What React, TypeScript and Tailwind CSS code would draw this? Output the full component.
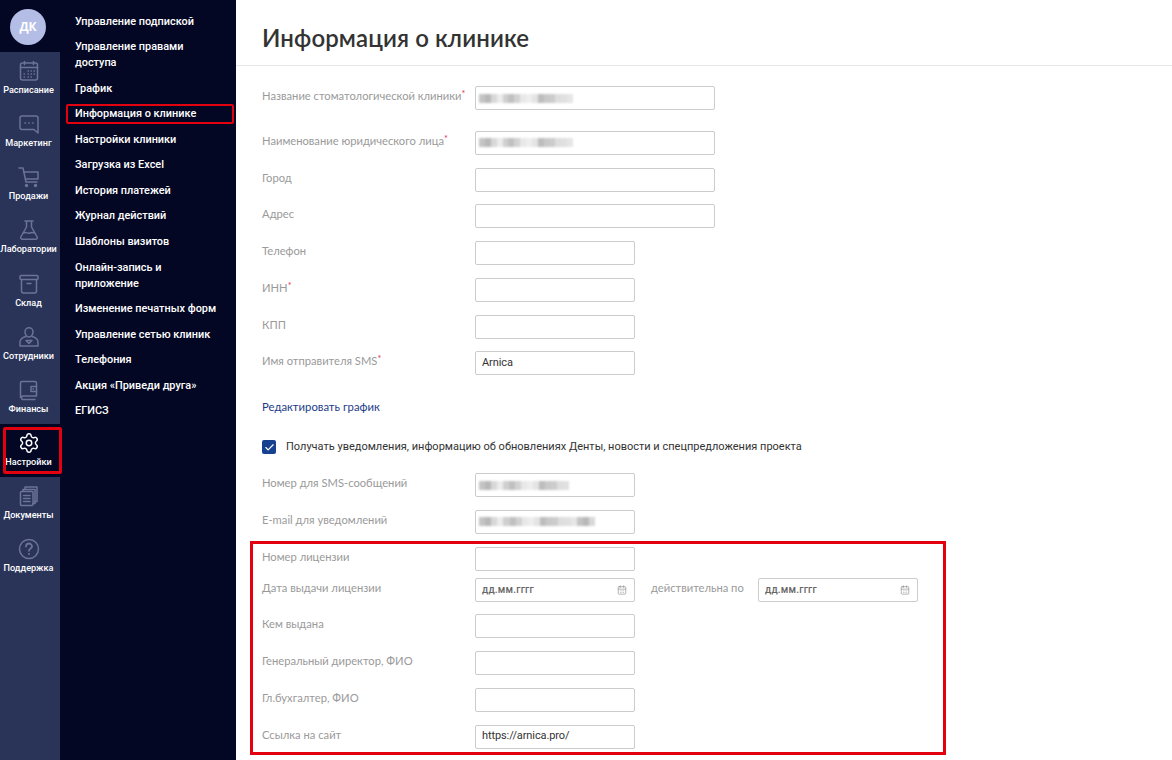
import type { ReactNode } from "react";
import { CalendarDays, Check, Settings } from "lucide-react";

function Glyph({ children }: { children: ReactNode }) {
  return (
    <svg width="22" height="22" viewBox="0 0 22 22" fill="none" stroke="#6b7496" strokeWidth="1.5" strokeLinecap="round" strokeLinejoin="round">
      {children}
    </svg>
  );
}

const railItems: { label: string; icon: ReactNode; active?: boolean }[] = [
  {
    label: "Расписание",
    icon: (
      <Glyph>
        <rect x="2.5" y="3" width="17" height="17" rx="2" />
        <path d="M2.5 7.5h17M6.5 1.5v3M15.5 1.5v3" />
        <path d="M10 11h.5M13 11h.5M16 11h.5M6 14h.5M10 14h.5M13 14h.5M16 14h.5M6 17h.5M10 17h.5M13 17h.5" strokeWidth="1.3" />
      </Glyph>
    ),
  },
  {
    label: "Маркетинг",
    icon: (
      <Glyph>
        <path d="M4 3h14a2 2 0 0 1 2 2v15l-4-3.5H4a2 2 0 0 1-2-2V5a2 2 0 0 1 2-2Z" />
        <path d="M7 10h.5M10.7 10h.5M14.5 10h.5" />
      </Glyph>
    ),
  },
  {
    label: "Продажи",
    icon: (
      <Glyph>
        <path d="M1 2h4l3 14h11" />
        <path d="M5.8 6H20v7H7.3" />
        <circle cx="8.5" cy="19.5" r="1" fill="#6b7496" />
        <circle cx="17.5" cy="19.5" r="1" fill="#6b7496" />
      </Glyph>
    ),
  },
  {
    label: "Лаборатории",
    icon: (
      <Glyph>
        <path d="M7 2h8M8.5 2v6L2.8 18a1.5 1.5 0 0 0 1.3 2.2h13.8a1.5 1.5 0 0 0 1.3-2.2L13.5 8V2" />
        <path d="M5.5 14c2.5-1.5 4.5 1 6.5 0s3-.6 4.5 0" />
      </Glyph>
    ),
  },
  {
    label: "Склад",
    icon: (
      <Glyph>
        <rect x="2" y="2.5" width="18" height="4" rx="1" />
        <path d="M3.5 6.5V18a2 2 0 0 0 2 2h11a2 2 0 0 0 2-2V6.5M9 10.5h4" />
      </Glyph>
    ),
  },
  {
    label: "Сотрудники",
    icon: (
      <Glyph>
        <path d="M11 1.8c2.4 0 4 1.9 4 4.2s-1.600 5-4 5-4-2.700-4-5 1.600-4.200 4-4.200Z" />
        <path d="M8 10.500c-3 .8-6 2.300-6 5.500v4h18v-4c0-3.200-3-4.700-6-5.500" />
        <path d="M8 14.500h6l-3 3Z" />
      </Glyph>
    ),
  },
  {
    label: "Финансы",
    icon: (
      <Glyph>
        <path d="M4 2.500h13a1.500 1.500 0 0 1 1.500 1.500v13H4.500a2 2 0 0 0 0 3.500H17" />
        <path d="M4 2.500a1.500 1.500 0 0 0-1.500 1.500v14.500" />
        <path d="M18.500 7.500h-5.500v5h5.500M15 10h.5" />
      </Glyph>
    ),
  },
  {
    label: "Настройки",
    icon: <Settings size={22} strokeWidth={1.6} className="text-white" />,
    active: true,
  },
  {
    label: "Документы",
    icon: (
      <Glyph>
        <path d="M7 4.500V2h12v14.500h-2.500" />
        <path d="M5 6.500V4.500h12v14H15" />
        <rect x="2.500" y="6.500" width="12.500" height="14" rx="1" />
        <path d="M5.500 10.500h6.500M5.500 13.500h6.500M5.500 16.500h6.500" />
      </Glyph>
    ),
  },
  {
    label: "Поддержка",
    icon: (
      <Glyph>
        <circle cx="11" cy="11" r="9.500" />
        <path d="M8 8.500a3 3 0 0 1 6 0c0 2-3 2.200-3 4.300" strokeWidth="1.800" />
        <path d="M11 16h.01" strokeWidth="2" />
      </Glyph>
    ),
  },
];

const menuItems = [
  "Управление подпиской",
  "Управление правами доступа",
  "График",
  "Информация о клинике",
  "Настройки клиники",
  "Загрузка из Excel",
  "История платежей",
  "Журнал действий",
  "Шаблоны визитов",
  "Онлайн-запись и приложение",
  "Изменение печатных форм",
  "Управление сетью клиник",
  "Телефония",
  "Акция «Приведи друга»",
  "ЕГИСЗ",
];

const blurShades = [
  "#e4e4e4", "#d2d2d2", "#ececec", "#c4c4c4", "#dedede", "#bdbdbd", "#e8e8e8", "#cfcfcf",
  "#b8b8b8", "#e0e0e0", "#c9c9c9", "#eeeeee", "#c0c0c0", "#d8d8d8", "#e6e6e6", "#cccccc",
];

function Blurred({ width }: { width: number }) {
  const cells = Math.round(width / 6);
  return (
    <div className="-ml-[3px] flex h-[9px] blur-[1px]" style={{ width }}>
      {Array.from({ length: cells }, (_, i) => (
        <span key={i} className="h-full flex-1" style={{ background: blurShades[(i * 5 + 3) % blurShades.length] }} />
      ))}
    </div>
  );
}

function Label({ children, required }: { children: ReactNode; required?: boolean }) {
  return (
    <div className="w-[213px] shrink-0 -translate-y-[2px] whitespace-nowrap font-['Lato',sans-serif] text-[11.2px] leading-4 text-[#9a9a9a]">
      {children}
      {required && <sup className="-top-[3px] text-[9px] text-[#d9304f]">*</sup>}
    </div>
  );
}

function Input({ wide, children }: { wide?: boolean; children?: ReactNode }) {
  return (
    <div
      className={`flex h-6 shrink-0 items-center rounded-[2px] border border-[#cccccc] bg-white px-[6px] font-['Roboto',sans-serif] text-[11px] tracking-[-0.1px] text-[#333333] ${
        wide ? "w-[240px]" : "w-[160px]"
      }`}
    >
      {children}
    </div>
  );
}

function Row({
  label,
  required,
  wide,
  children,
  className = "mt-[12.75px]",
}: {
  label: string;
  required?: boolean;
  wide?: boolean;
  children?: ReactNode;
  className?: string;
}) {
  return (
    <div className={`flex items-center ${className}`}>
      <Label required={required}>{label}</Label>
      <Input wide={wide}>{children}</Input>
    </div>
  );
}

function DateValue() {
  return (
    <div className="flex w-full items-center justify-between pr-[1px]">
      <span className="text-[10px] font-medium tracking-[0.2px] text-[#666666]">дд.мм.гггг</span>
      <CalendarDays size={10} strokeWidth={1.5} className="text-[#888888]" />
    </div>
  );
}

function Rail() {
  return (
    <aside className="flex w-[60px] shrink-0 flex-col bg-[#2a3358]">
      <div className="flex h-[52px] items-start justify-center bg-[#030724] pr-[4px] pt-[9px]">
        <div className="flex h-9 w-9 items-center justify-center rounded-full bg-[#b4bde6] text-[12px] font-bold text-white">
          ДК
        </div>
      </div>
      {railItems.map(({ label, icon, active }) => (
        <div
          key={label}
          className={`relative flex h-[53.15px] flex-col items-center pr-[3px] pt-[8px] ${active ? "bg-[#030724]" : ""}`}
        >
          {icon}
          <span className="whitespace-nowrap font-['Roboto',sans-serif] text-[9.1px] font-medium leading-4 text-white">{label}</span>
          {active && <span className="absolute left-[3px] top-[3px] h-[47px] w-[59px] rounded-[2px] border-[3px] border-[#e3000f]" />}
        </div>
      ))}
    </aside>
  );
}

function Menu() {
  return (
    <nav className="flex w-[176px] shrink-0 flex-col gap-[9.57px] bg-[#030724] pl-[15px] pr-[14px] pt-[13.5px]">
      {menuItems.map((item) => (
        <div key={item} className="relative font-['Roboto',sans-serif] text-[10.9px] font-medium leading-4 text-white">
          {item}
          {item === "Информация о клинике" && (
            <span className="absolute -left-[9px] -top-[2px] h-[20px] w-[168px] rounded-[2px] border-[2.5px] border-[#e3000f]" />
          )}
        </div>
      ))}
    </nav>
  );
}

export default function App() {
  return (
    <div className="flex h-[760px] w-[1172px] overflow-hidden bg-white font-['Open_Sans',sans-serif]">
      <Rail />
      <Menu />
      <main className="min-w-0 flex-1">
        <header className="flex h-[66px] items-center border-b border-[#e6e6e6] pl-[26px] pt-[10px]">
          <h1 className="font-['Lato',sans-serif] text-[24px] font-semibold leading-6 tracking-[0.1px] text-[#333333]">Информация о клинике</h1>
        </header>
        <div className="pl-[26px]">
          <Row label="Название стоматологической клиники" required wide className="mt-5">
            <Blurred width={94} />
          </Row>
          <Row label="Наименование юридического лица" required wide className="mt-[20.75px]">
            <Blurred width={94} />
          </Row>
          <Row label="Город" wide />
          <Row label="Адрес" wide />
          <Row label="Телефон" />
          <Row label="ИНН" required />
          <Row label="КПП" />
          <Row label="Имя отправителя SMS" required>
            Arnica
          </Row>
          <a className="mt-[23.75px] block font-['Lato',sans-serif] text-[11.3px] leading-4 text-[#1c3c86]">Редактировать график</a>
          <div className="mt-[24px] flex items-center gap-[10px]">
            <span className="flex h-[14px] w-[14px] items-center justify-center rounded-[2px] bg-[#17418f]">
              <Check size={11} strokeWidth={2.5} className="text-white" />
            </span>
            <span className="font-['Roboto',sans-serif] text-[11px] leading-4 text-[#333333]">
              Получать уведомления, информацию об обновлениях Денты, новости и спецпредложения проекта
            </span>
          </div>
          <Row label="Номер для SMS-сообщений" className="mt-[18px]">
            <Blurred width={90} />
          </Row>
          <Row label="E-mail для уведомлений">
            <Blurred width={116} />
          </Row>
          <div className="relative">
            <span className="absolute -left-[12px] -top-[6px] h-[214px] w-[696px] border-[3px] border-[#e3000f]" />
            <Row label="Номер лицензии" />
            <div className="mt-[7px] flex items-center">
              <Label>Дата выдачи лицензии</Label>
              <Input>
                <DateValue />
              </Input>
              <div className="w-[123px] shrink-0 -translate-y-[1px] pl-[16px] font-['Lato',sans-serif] text-[11.2px] text-[#9a9a9a]">
                действительна по
              </div>
              <Input>
                <DateValue />
              </Input>
            </div>
            <Row label="Кем выдана" />
            <Row label="Генеральный директор, ФИО" />
            <Row label="Гл.бухгалтер, ФИО" />
            <Row label="Ссылка на сайт">https://arnica.pro/</Row>
          </div>
        </div>
      </main>
    </div>
  );
}
